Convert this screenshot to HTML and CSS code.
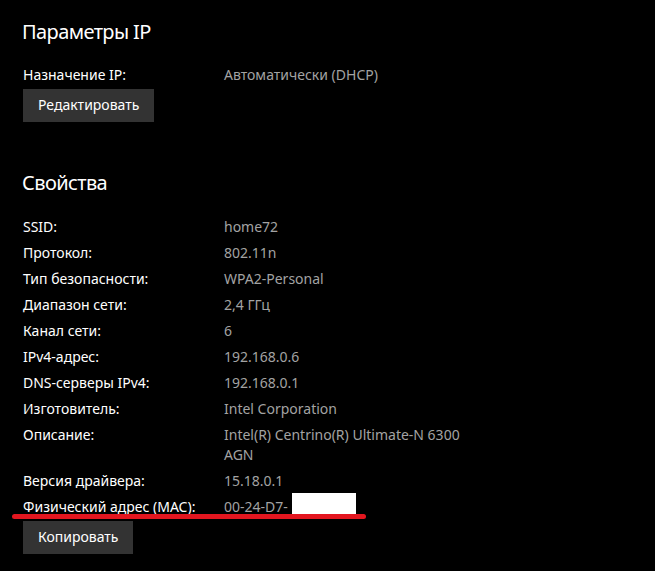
FILE: index.html
```html
<!DOCTYPE html>
<html lang="ru">
<head>
<meta charset="utf-8">
<title>Параметры IP</title>
<link rel="stylesheet" href="styles.css">
</head>
<body>
<main class="page">
  <section class="section section-ip">
    <h2 class="title">Параметры IP</h2>
    <div class="props">
      <div class="label">Назначение IP:</div>
      <div class="value">Автоматически (DHCP)</div>
    </div>
    <button class="btn" type="button">Редактировать</button>
  </section>

  <section class="section section-props">
    <h2 class="title">Свойства</h2>
    <div class="props">
      <div class="label">SSID:</div><div class="value">home72</div>
      <div class="label">Протокол:</div><div class="value">802.11n</div>
      <div class="label">Тип безопасности:</div><div class="value">WPA2-Personal</div>
      <div class="label">Диапазон сети:</div><div class="value">2,4 ГГц</div>
      <div class="label">Канал сети:</div><div class="value">6</div>
      <div class="label">IPv4-адрес:</div><div class="value">192.168.0.6</div>
      <div class="label">DNS-серверы IPv4:</div><div class="value">192.168.0.1</div>
      <div class="label">Изготовитель:</div><div class="value">Intel Corporation</div>
      <div class="label">Описание:</div><div class="value value-wrap">Intel(R) Centrino(R) Ultimate-N 6300 AGN</div>
      <div class="label">Версия драйвера:</div><div class="value">15.18.0.1</div>
      <div class="label mac-label">Физический адрес (MAC):<span class="underline"></span></div>
      <div class="value mac-value">00-24-D7-<span class="redact"></span></div>
    </div>
    <button class="btn" type="button">Копировать</button>
  </section>
</main>
</body>
</html>
```

FILE: styles.css
```css
html, body {
  margin: 0;
  padding: 0;
  background: #000;
}

body {
  font-family: "Segoe UI", "Noto Sans", "Open Sans", sans-serif;
  color: #fff;
  width: 655px;
  height: 571px;
  overflow: hidden;
}

.page {
  padding: 18px 0 0 23px;
}

.section {
  display: flex;
  flex-direction: column;
  align-items: flex-start;
}

.section-props {
  margin-top: 47px;
}

.title {
  margin: 0;
  font-size: 20px;
  line-height: 28px;
  font-weight: 400;
  letter-spacing: -0.6px;
  color: #fff;
  margin-left: -1px;
}

.props {
  display: grid;
  grid-template-columns: 201px 250px;
  font-size: 14px;
  line-height: 20px;
}

.section-ip .props {
  margin-top: 16px;
}

.section-props .props {
  margin-top: 17px;
}

.label,
.value {
  padding: 3px 0;
}

.label {
  color: #fff;
}

.value {
  color: #a3a3a3;
}

.mac-label {
  position: relative;
}

.mac-value {
  position: relative;
}

.underline {
  position: absolute;
  left: -11px;
  top: 20px;
  width: 354px;
  height: 5px;
  border-radius: 3px;
  background: #e3161f;
}

.redact {
  position: absolute;
  left: 68px;
  top: -1px;
  width: 64px;
  height: 21px;
  background: #fff;
}

.btn {
  margin-top: 1px;
  height: 33px;
  padding: 6px 15px 7px;
  border: none;
  background: #333;
  color: #fff;
  font-family: inherit;
  font-size: 14px;
  line-height: 20px;
  cursor: pointer;
}
```
